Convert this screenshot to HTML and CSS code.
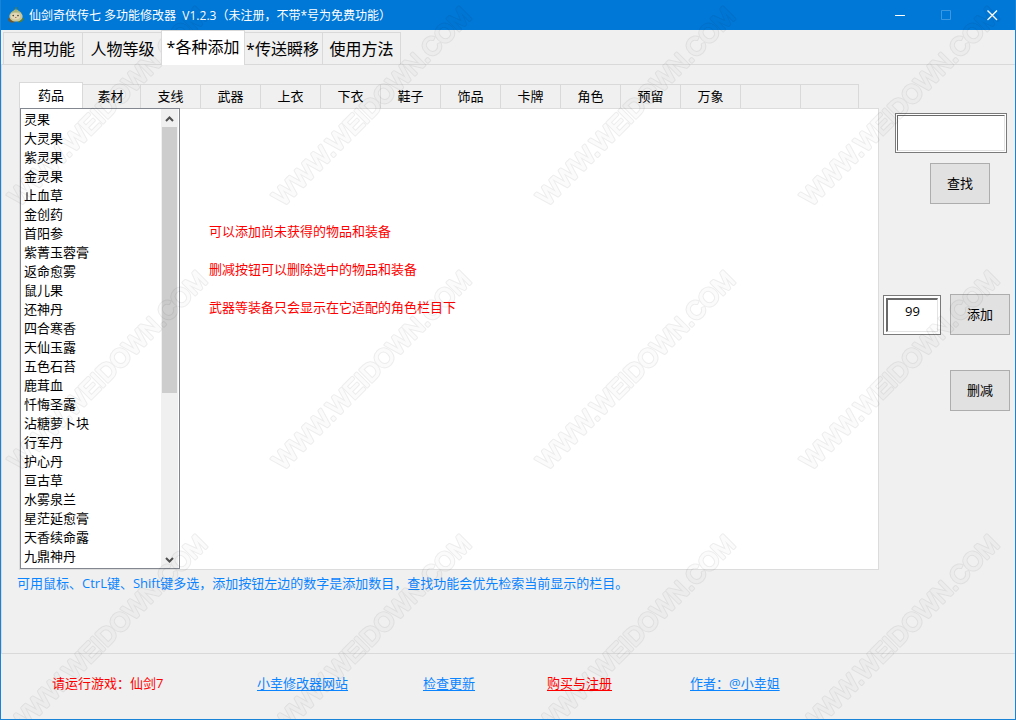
FILE: index.html
```html
<!DOCTYPE html>
<html lang="zh-CN">
<head>
<meta charset="utf-8">
<meta name="viewport" content="width=device-width, initial-scale=1">
<title>仙剑奇侠传七 多功能修改器</title>
<link rel="stylesheet" href="styles.css">
</head>
<body>
<div class="window">
  <header class="titlebar">
    <svg class="app-icon" viewBox="0 0 16 16" aria-hidden="true">
      <path d="M0 12c2-2.500 4-2 5-1s3 4 1 4.500H3c-2-1-3-2-3-3.500z" fill="#6f5a32"/>
      <path d="M10 12c2-2 4-1.500 6-.5-1 2.500-3 4-6 4z" fill="#55803a"/>
      <path d="M8 1.500c1.200 2.200 6.400 4 6.600 7.500.2 3.500-2.900 5.500-6.600 5.500S1.200 12.500 1.400 9C1.600 5.500 6.800 3.700 8 1.500z" fill="#c9c69a"/>
      <path d="M8 1.500c1 2 4.500 3 5.800 4.800C11 4.800 5 4.800 2.200 6.300 3.500 4.500 7 3.500 8 1.500z" fill="#a5b37c"/>
      <path d="M7.400 0h1.400l-.3 3h-.9z" fill="#4f7d35"/>
      <ellipse cx="7.500" cy="9.300" rx="4.600" ry="3.200" fill="#e3d9b8"/>
      <circle cx="5.200" cy="8.600" r=".8" fill="#3b3826"/><circle cx="10" cy="8.600" r=".8" fill="#3b3826"/>
      <path d="M7 10.500h1.500" stroke="#a06045" stroke-width=".8"/>
    </svg>
    <h1 class="title">仙剑奇侠传七 多功能修改器&nbsp; V1.2.3（未注册，不带*号为免费功能）</h1>
    <button class="win-btn" type="button" aria-label="最小化"><svg viewBox="0 0 11 11"><path d="M0 5.500h10"/></svg></button>
    <button class="win-btn" type="button" aria-label="最大化" disabled><svg viewBox="0 0 11 11"><path d="M.5.5h9v9h-9z"/></svg></button>
    <button class="win-btn" type="button" aria-label="关闭"><svg viewBox="0 0 11 11"><path d="M.5.500l9.500 9.500M10 .500L.5 10" stroke-width="1.400"/></svg></button>
  </header>

  <nav class="main-tabs" role="tablist">
    <button class="main-tab" type="button" role="tab">常用功能</button>
    <button class="main-tab" type="button" role="tab">人物等级</button>
    <button class="main-tab active" type="button" role="tab" aria-selected="true">*各种添加</button>
    <button class="main-tab" type="button" role="tab">*传送瞬移</button>
    <button class="main-tab" type="button" role="tab">使用方法</button>
  </nav>

  <main class="page">
    <div class="workspace">
      <section class="items">
        <div class="item-tabs" role="tablist">
          <button class="item-tab active" type="button" role="tab" aria-selected="true">药品</button>
          <button class="item-tab" type="button" role="tab">素材</button>
          <button class="item-tab" type="button" role="tab">支线</button>
          <button class="item-tab" type="button" role="tab">武器</button>
          <button class="item-tab" type="button" role="tab">上衣</button>
          <button class="item-tab" type="button" role="tab">下衣</button>
          <button class="item-tab" type="button" role="tab">鞋子</button>
          <button class="item-tab" type="button" role="tab">饰品</button>
          <button class="item-tab" type="button" role="tab">卡牌</button>
          <button class="item-tab" type="button" role="tab">角色</button>
          <button class="item-tab" type="button" role="tab">预留</button>
          <button class="item-tab" type="button" role="tab">万象</button>
          <button class="item-tab" type="button" role="tab"></button>
          <button class="item-tab" type="button" role="tab"></button>
        </div>
        <div class="panel">
          <div class="listbox">
            <select class="list" multiple size="24" aria-label="药品">
              <option>灵果</option>
              <option>大灵果</option>
              <option>紫灵果</option>
              <option>金灵果</option>
              <option>止血草</option>
              <option>金创药</option>
              <option>首阳参</option>
              <option>紫菁玉蓉膏</option>
              <option>返命愈雾</option>
              <option>鼠儿果</option>
              <option>还神丹</option>
              <option>四合寒香</option>
              <option>天仙玉露</option>
              <option>五色石苔</option>
              <option>鹿茸血</option>
              <option>忏悔圣露</option>
              <option>沾糖萝卜块</option>
              <option>行军丹</option>
              <option>护心丹</option>
              <option>亘古草</option>
              <option>水雾泉兰</option>
              <option>星茫延愈膏</option>
              <option>天香续命露</option>
              <option>九鼎神丹</option>
            </select>
            <div class="scrollbar" aria-hidden="true">
              <svg class="arrow" viewBox="0 0 9 6"><path d="M1 5l3.500-3.500L8 5"/></svg>
              <div class="track"><div class="thumb"></div></div>
              <svg class="arrow" viewBox="0 0 9 6"><path d="M1 1l3.500 3.500L8 1"/></svg>
            </div>
          </div>
          <div class="tips">
            <p>可以添加尚未获得的物品和装备</p>
            <p>删减按钮可以删除选中的物品和装备</p>
            <p>武器等装备只会显示在它适配的角色栏目下</p>
          </div>
        </div>
      </section>

      <aside class="actions">
        <span class="field search"><input type="text" aria-label="查找"></span>
        <button class="btn find" type="button">查找</button>
        <div class="add-row">
          <span class="field count"><input type="text" value="99" aria-label="添加数目"></span>
          <button class="btn" type="button">添加</button>
        </div>
        <button class="btn" type="button">删减</button>
      </aside>
    </div>
    <p class="note">可用鼠标、CtrL键、Shift键多选，添加按钮左边的数字是添加数目，查找功能会优先检索当前显示的栏目。</p>
  </main>

  <footer class="footer">
    <span class="status">请运行游戏：仙剑7</span>
    <span><a href="#">小幸修改器网站</a></span>
    <span><a href="#">检查更新</a></span>
    <span><a class="buy" href="#">购买与注册</a></span>
    <span><a href="#">作者：@小幸姐</a></span>
  </footer>

  <svg class="watermark" aria-hidden="true">
    <defs>
      <mask id="ring" maskUnits="userSpaceOnUse" x="0" y="0" width="264" height="264">
        <text class="ring-outer" transform="translate(18 207) rotate(-45)">WWW.WEIDOWN.COM</text>
        <text class="ring-inner" transform="translate(18 207) rotate(-45)">WWW.WEIDOWN.COM</text>
      </mask>
      <pattern id="mark" width="264" height="264" patternUnits="userSpaceOnUse">
        <rect class="ink" width="264" height="264" mask="url(#ring)"/>
      </pattern>
    </defs>
    <rect width="100%" height="100%" fill="url(#mark)"/>
  </svg>
</div>
</body>
</html>
```

FILE: styles.css
```css
* { box-sizing: border-box; }

body {
  margin: 0;
  background: #f0f0f0;
  color: #000;
  font: 13px/19px "Open Sans", "Noto Sans CJK SC", sans-serif;
}

button, input, select { font: inherit; color: inherit; }
p, h1 { margin: 0; }

.window {
  position: relative;
  display: flex;
  flex-direction: column;
  min-height: 100vh;
  border: 1px solid #1883d7;
  border-top: 0;
}

/* title bar */
.titlebar {
  display: flex;
  align-items: center;
  height: 30px;
  padding-left: 7px;
  background: #0078d7;
  color: #fff;
}
.app-icon { width: 16px; height: 16px; margin-right: 5px; }
.title { flex: 1; font-size: 12px; font-weight: 400; white-space: nowrap; }
.win-btn {
  display: grid;
  place-items: center;
  width: 46px;
  height: 30px;
  padding: 0;
  border: 0;
  background: none;
}
.win-btn svg { width: 11px; height: 11px; fill: none; stroke: #fff; }
.win-btn:disabled svg { stroke: #3d98e0; }

/* top level tabs */
.main-tabs {
  display: flex;
  align-items: flex-end;
  padding: 0 2px;
  height: 34px;
}
.main-tab {
  width: 80px;
  height: 32px;
  padding: 0;
  border: 1px solid #d9d9d9;
  border-right: 0;
  border-bottom: 0;
  background: #f0f0f0;
  font-size: 16px;
  line-height: 24px;
  white-space: nowrap;
}
.main-tab:first-child { width: 79px; }
.main-tab:last-child { width: 79px; border-right: 1px solid #d9d9d9; }
.main-tab.active {
  z-index: 1;
  width: 84px;
  height: 35px;
  margin: 0 -3px -1px -1px;
  padding-bottom: 2px;
  background: #fff;
  border-right: 1px solid #d9d9d9;
}

.page {
  flex: 1;
  padding: 17px 5px 0 15px;
  border: 1px solid #d9d9d9;
  border-right: 0;
}
.workspace { display: flex; }
.items { flex: 1; min-width: 0; padding-left: 2px; }

/* item category tabs */
.item-tabs {
  display: flex;
  align-items: flex-end;
  height: 26px;
  padding-left: 1px;
}
.item-tab {
  flex: 0 1 60px;
  height: 24px;
  padding: 0;
  border: 1px solid #d9d9d9;
  border-right: 0;
  border-bottom: 0;
  background: #f0f0f0;
}
.item-tab:last-child { flex-basis: 59px; border-right: 1px solid #d9d9d9; }
.item-tab.active {
  z-index: 1;
  flex-basis: 64px;
  height: 26px;
  margin: 0 -3px 0 -1px;
  background: #fff;
  border-right: 1px solid #d9d9d9;
}

.panel {
  display: flex;
  border: 1px solid #dcdcdc;
  background: #fff;
}
.listbox {
  display: flex;
  width: 160px;
  height: 461px;
  margin-top: -1px;
  padding: 0 1px;
  border: 1px solid #828790;
}
.list {
  flex: 1;
  min-width: 0;
  height: 459px;
  padding: 0;
  border: 0;
  border-radius: 0;
  outline: 0;
  overflow: hidden;
  background: #fff;
}
.list option {
  height: 19px;
  min-height: 19px;
  padding: 0 2px;
  line-height: 19px;
}
.scrollbar {
  display: flex;
  flex-direction: column;
  align-items: center;
  width: 17px;
  background: #f0f0f0;
}
.arrow {
  width: 9px;
  height: 6px;
  margin: 7px 0 5px;
  fill: none;
  stroke: #505050;
  stroke-width: 2;
}
.track { flex: 1; width: 15px; }
.thumb { height: 63%; background: #cdcdcd; }
.tips { padding: 103px 0 0 29px; color: #f00; line-height: 38px; }

/* search and quantity controls */
.actions {
  display: flex;
  flex-direction: column;
  align-items: flex-end;
  width: 131px;
  padding-top: 31px;
}
.field {
  display: block;
  height: 40px;
  border: 1px solid #7a7a7a;
  background: #fff;
}
.field input {
  display: block;
  width: 100%;
  height: 100%;
  border: 1px solid #696969;
  border-right-color: #e3e3e3;
  border-bottom-color: #e3e3e3;
  border-radius: 0;
  outline: 0;
  background: #fff;
}
.search { width: 112px; margin-right: 3px; padding: 1px; }
.count { width: 58px; margin-top: 1px; padding: 2px; }
.count input {
  padding: 0 0 10px;
  border-width: 2px 1px 1px 2px;
  text-align: center;
}
.btn {
  width: 60px;
  height: 41px;
  padding: 0;
  border: 1px solid #adadad;
  background: #e1e1e1;
}
.find { margin: 10px 20px 90px 0; }
.add-row { display: flex; gap: 9px; margin-bottom: 35px; }

.note { padding-top: 4px; color: #0a84ff; white-space: nowrap; }

.footer {
  display: grid;
  grid-template-columns: 205fr 166fr 124fr 143fr 325fr;
  padding: 20px 0 26px 51px;
}
.footer a { color: #0a84ff; text-underline-offset: 2px; }
.footer .status, .footer .buy { color: #f00; }

/* diagonal repeating mark over the whole window */
.watermark {
  position: absolute;
  inset: 0;
  width: 100%;
  height: 100%;
  pointer-events: none;
}
.watermark text {
  font: 25px "Liberation Sans", sans-serif;
  stroke-linejoin: round;
}
.ring-outer { fill: #fff; stroke: #fff; stroke-width: 3px; }
.ring-inner { fill: #333; stroke: #333; stroke-width: 1px; }
.ink { fill: rgba(0, 0, 0, 0.07); }
```
